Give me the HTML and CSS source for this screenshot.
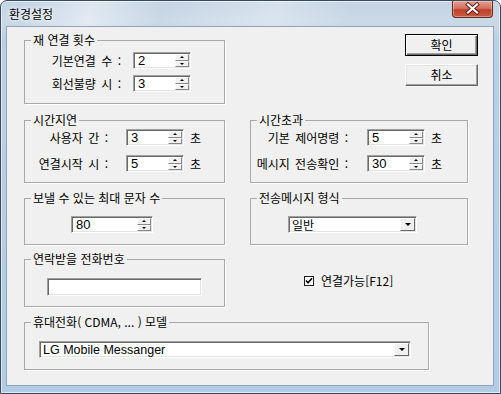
FILE: index.html
```html
<!DOCTYPE html>
<html lang="ko">
<head>
    <meta charset="UTF-8">
    <title>환경설정</title>
    <link rel="stylesheet" href="styles.css">
</head>
<body>
<div class="window">
  <div class="titlebar">
    <span class="title">환경설정</span>
    <span class="close">
      <svg width="41" height="17" viewBox="0 0 41 17">
        <path d="M16 4.5 L25 12.5 M25 4.5 L16 12.5" stroke="#5a1a14" stroke-width="4" stroke-linecap="square"/>
        <path d="M16 4.5 L25 12.5 M25 4.5 L16 12.5" stroke="#fff" stroke-width="2.2" stroke-linecap="square"/>
      </svg>
    </span>
  </div>

  <div class="client">
    <div class="row row-top">
      <fieldset class="group left g-retry">
        <legend>재 연결 횟수</legend>
        <div class="fields">
          <span class="label">기본연결 수 :</span>
          <div class="spin"><span class="val">2</span><span class="arrows"><i class="up"></i><i class="down"></i></span></div>
          <span class="label">회선불량 시 :</span>
          <div class="spin"><span class="val">3</span><span class="arrows"><i class="up"></i><i class="down"></i></span></div>
        </div>
      </fieldset>
      <div class="buttons">
        <div class="btn default"><span>확인</span></div>
        <div class="btn">취소</div>
      </div>
    </div>

    <div class="row row-delay">
      <fieldset class="group left g-delay">
        <legend>시간지연</legend>
        <div class="fields">
          <span class="label">사용자 간 :</span>
          <div class="spin"><span class="val">3</span><span class="arrows"><i class="up"></i><i class="down"></i></span></div>
          <span class="unit">초</span>
          <span class="label">연결시작 시 :</span>
          <div class="spin"><span class="val">5</span><span class="arrows"><i class="up"></i><i class="down"></i></span></div>
          <span class="unit">초</span>
        </div>
      </fieldset>
      <fieldset class="group right g-timeout">
        <legend>시간초과</legend>
        <div class="fields">
          <span class="label">기본 제어명령 :</span>
          <div class="spin"><span class="val">5</span><span class="arrows"><i class="up"></i><i class="down"></i></span></div>
          <span class="unit">초</span>
          <span class="label">메시지 전송확인 :</span>
          <div class="spin"><span class="val">30</span><span class="arrows"><i class="up"></i><i class="down"></i></span></div>
          <span class="unit">초</span>
        </div>
      </fieldset>
    </div>

    <div class="row row-limit">
      <fieldset class="group left g-limit">
        <legend>보낼 수 있는 최대 문자 수</legend>
        <div class="spin max-len"><span class="val">80</span><span class="arrows"><i class="up"></i><i class="down"></i></span></div>
      </fieldset>
      <fieldset class="group right g-format">
        <legend>전송메시지 형식</legend>
        <div class="combo format"><span class="val">일반</span><span class="drop"></span></div>
      </fieldset>
    </div>

    <div class="row row-phone">
      <fieldset class="group left g-phone">
        <legend>연락받을 전화번호</legend>
        <div class="text-box"></div>
      </fieldset>
      <div class="checkline">
        <span class="check">
          <svg width="8" height="8" viewBox="0 0 8 8"><path d="M1 3.5 L3 5.8 L7 1.2" fill="none" stroke="#000" stroke-width="1.6"/></svg>
        </span>
        <span>연결가능[F12]</span>
      </div>
    </div>

    <div class="row row-model">
      <fieldset class="group wide g-model">
        <legend>휴대전화( CDMA, ... ) 모델</legend>
        <div class="combo model"><span class="val latin">LG Mobile Messanger</span><span class="drop"></span></div>
      </fieldset>
    </div>
  </div>
</div>
</body>
</html>
```

FILE: styles.css
```css
* {
    box-sizing: border-box;
}
html, body {
    margin: 0;
    padding: 0;
}
body {
    width: 501px;
    height: 394px;
    overflow: hidden;
    background: #fff;
    font-family: "Noto Sans CJK KR", "Liberation Sans", sans-serif;
    font-size: 12px;
    line-height: 14px;
    color: #000;
}

/* window frame */
.window {
    width: 501px;
    height: 394px;
    display: flex;
    flex-direction: column;
    border: 1px solid #3a4a5c;
    border-radius: 7px 7px 0 0;
    padding: 0 6px 7px 5px;
    background: linear-gradient(to bottom, #c3d3e3 0px, #cbd9e7 20px, #b9cfe5 40px, #b3cbe4 100%);
    box-shadow: inset 0 0 0 1px rgba(255,255,255,.6);
}
.titlebar {
    height: 25px;
    display: flex;
    align-items: flex-start;
    justify-content: space-between;
    background: linear-gradient(105deg, rgba(255,255,255,0) 5%, rgba(255,255,255,.45) 18%, rgba(255,255,255,0) 32%, rgba(255,255,255,.3) 55%, rgba(255,255,255,0) 70%);
    margin: 0 -5px 0 -4px;
    padding: 0 5px 0 4px;
    border-radius: 6px 6px 0 0;
}
.title {
    margin: 6px 0 0 3px;
    text-shadow: 0 0 6px #fff, 0 0 3px #fff;
}
.close {
    width: 41px;
    height: 17px;
    margin: 0 1px 0 0;
    display: block;
    border: 1px solid #5d2a22;
    border-top: 0;
    border-radius: 0 0 4px 4px;
    background: linear-gradient(to bottom, #e3a093 0%, #d6705f 45%, #c0412e 55%, #c95a3e 100%);
    box-shadow: inset 0 0 0 1px rgba(255,255,255,.35);
}
.close svg {
    display: block;
    margin: -1px 0 0 -1px;
}

.client {
    flex: 1;
    display: flex;
    flex-direction: column;
    background: #f0f0f0;
    border: 1px solid #8fa5bc;
    padding: 6px 15px 0 17px;
}

/* rows */
.row {
    display: flex;
    align-items: flex-start;
}
.row-top {
    justify-content: space-between;
}
.row-delay {
    margin-top: 9px;
    gap: 25px;
}
.row-limit {
    margin-top: 8px;
    gap: 25px;
}
.row-phone {
    margin-top: 7px;
}
.row-model {
    margin-top: 8px;
}

/* group boxes */
.group {
    margin: 0;
    padding: 0;
    min-width: 0;
    border: 1px solid #a9a9a9;
    box-shadow: 1px 1px 0 #fff;
}
.group legend {
    margin-left: 6px;
    padding: 0 2px;
    line-height: 14px;
    white-space: nowrap;
}
.left { width: 201px; }
.right { width: 218px; }
.wide { width: 405px; }

.g-retry { height: 71px; }
.g-delay, .g-timeout { height: 70px; }
.g-limit, .g-format { height: 54px; }
.g-phone, .g-model { height: 55px; }

.fields {
    display: grid;
    align-items: center;
}
.label {
    text-align: right;
    white-space: nowrap;
    word-spacing: 2px;
}
.g-retry .fields {
    grid-template-columns: 98px 58px;
    row-gap: 6px;
    margin: 5px 0 0 10px;
}
.g-retry .label { padding-right: 12px; }
.g-delay .fields {
    grid-template-columns: 91px 58px auto;
    row-gap: 9px;
    margin: 2px 0 0 10px;
}
.g-delay .label { padding-right: 18px; }
.g-timeout .fields {
    grid-template-columns: 114px 58px auto;
    row-gap: 9px;
    margin: 2px 0 0 2px;
}
.g-timeout .label { padding-right: 19px; }
.unit {
    margin-left: 6px;
}

/* sunken edit controls */
.spin, .combo, .text-box {
    display: flex;
    height: 17px;
    background: #fff;
    border: 1px solid;
    border-color: #a0a0a0 #fff #fff #a0a0a0;
    box-shadow: inset 1px 1px 0 #696969, inset -1px -1px 0 #e3e3e3;
}
.val {
    flex: 1;
    padding: 1px 0 0 3px;
    font-family: "Liberation Sans", "Noto Sans CJK KR", sans-serif;
    font-size: 13px;
    line-height: 14px;
}
.spin .val { padding-left: 4px; }
.arrows {
    width: 14px;
    display: flex;
    flex-direction: column;
    margin: 1px 1px 1px 0;
}
.arrows i {
    flex: 1;
    display: flex;
    align-items: center;
    justify-content: center;
    background: #f0f0f0;
    border: 1px solid;
    border-color: #fff #888 #888 #fff;
}
.arrows i::after {
    content: "";
    border-left: 2px solid transparent;
    border-right: 2px solid transparent;
}
.arrows .up::after { border-bottom: 2px solid #000; }
.arrows .down::after { border-top: 2px solid #000; }

.max-len {
    width: 82px;
    margin: 11px 0 0 46px;
}

.combo .val {
    font-family: "Noto Sans CJK KR", "Liberation Sans", sans-serif;
    font-size: 12px;
}
.combo .val.latin {
    font-family: "Liberation Sans", sans-serif;
    font-size: 12.5px;
}
.drop {
    width: 15px;
    margin: 1px 1px 1px 0;
    display: flex;
    align-items: center;
    justify-content: center;
    background: #f0f0f0;
    border: 1px solid;
    border-color: #fff #696969 #696969 #fff;
}
.drop::after {
    content: "";
    border-left: 3px solid transparent;
    border-right: 3px solid transparent;
    border-top: 3px solid #000;
}
.format {
    width: 129px;
    margin: 11px 0 0 37px;
}
.model {
    width: 372px;
    margin: 12px 0 0 14px;
}
.text-box {
    width: 155px;
    height: 18px;
    margin: 12px 0 0 22px;
}

/* checkbox */
.checkline {
    display: flex;
    align-items: center;
    gap: 7px;
    margin: 22px 0 0 79px;
}
.check {
    width: 10px;
    height: 10px;
    display: flex;
    align-items: center;
    justify-content: center;
    background: #fff;
    border: 1px solid #1e1e1e;
}

/* push buttons */
.buttons {
    display: flex;
    flex-direction: column;
    gap: 8px;
    margin-top: 1px;
}
.btn {
    width: 73px;
    height: 22px;
    display: flex;
    align-items: center;
    justify-content: center;
    background: #f0f0f0;
    border: 1px solid;
    border-color: #fff #696969 #696969 #fff;
    box-shadow: inset -1px -1px 0 #a0a0a0, inset 1px 1px 0 #e3e3e3;
}
.btn.default {
    border: 1px solid #000;
    box-shadow: inset 1px 1px 0 #fff, inset -1px -1px 0 #696969, inset -2px -2px 0 #a0a0a0;
}
```
